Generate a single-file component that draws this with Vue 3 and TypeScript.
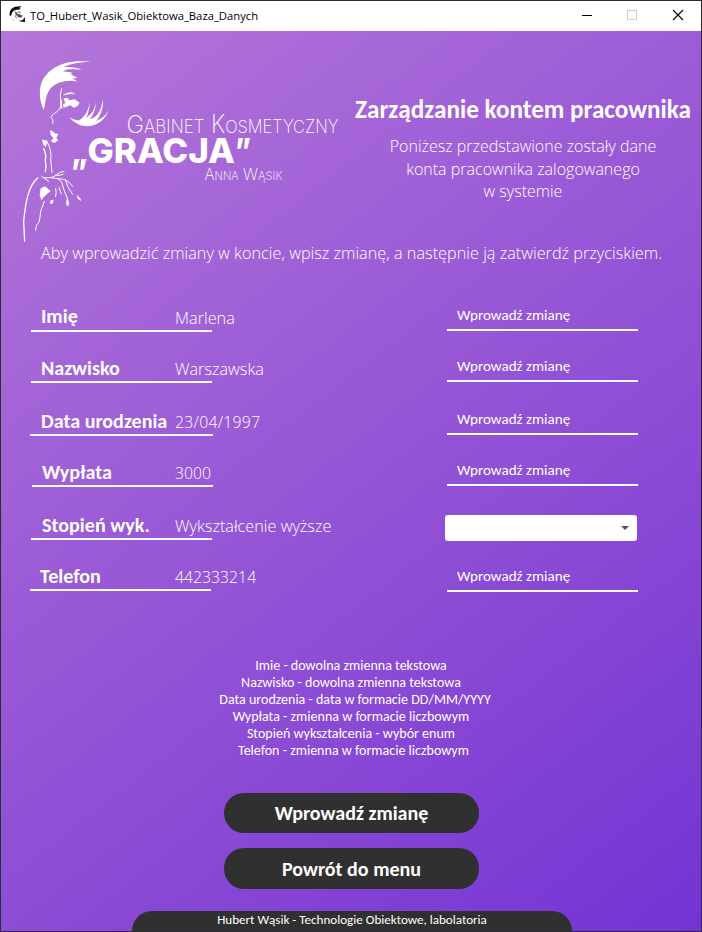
<script setup lang="ts">
import { ref } from 'vue'

interface Field {
  key: string
  label: string
  value: string
  select?: boolean
}

const fields: Field[] = [
  { key: 'imie', label: 'Imię', value: 'Marlena' },
  { key: 'nazwisko', label: 'Nazwisko', value: 'Warszawska' },
  { key: 'data', label: 'Data urodzenia', value: '23/04/1997' },
  { key: 'wyplata', label: 'Wypłata', value: '3000' },
  { key: 'stopien', label: 'Stopień wyk.', value: 'Wykształcenie wyższe', select: true },
  { key: 'telefon', label: 'Telefon', value: '442333214' },
]

const changes = ref<Record<string, string>>({})

const hints = [
  'Imie - dowolna zmienna tekstowa',
  'Nazwisko - dowolna zmienna tekstowa',
  'Data urodzenia - data w formacie DD/MM/YYYY',
  'Wypłata - zmienna w formacie liczbowym',
  'Stopień wykształcenia - wybór enum',
  'Telefon - zmienna w formacie liczbowym',
]
</script>

<template>
  <div class="window">
    <header class="titlebar">
      <svg class="app-icon" width="18" height="18" viewBox="0 0 54 54">
        <path d="M2 28C0 10 12 0 38 1L31 6 36 10 24 11C12 13 8 19 6 31Z" fill="#0b0b0b" />
        <path d="M18 17l6 5-4 10 2 5M26 19q5-3 9 1M25 24l7 2 8 4-5 4-8-2z" fill="#555" stroke="#333" stroke-width="2" />
        <path d="M27 41q10 6 16-1l5-7v15l-12-1z" fill="#111" />
        <path d="M6 35q4 8 11 9" fill="none" stroke="#bbb" stroke-width="2" />
      </svg>
      <span class="caption">TO_Hubert_Wasik_Obiektowa_Baza_Danych</span>
      <svg class="controls" width="137" height="30" viewBox="0 0 137 30" fill="none" shape-rendering="crispEdges">
        <path d="M18 14.5h10" stroke="#000" />
        <rect x="63.500" y="9.500" width="9" height="9" stroke="#ccc" />
        <path d="M109 9l10 10M119 9l-10 10" stroke="#000" stroke-width="1.1" shape-rendering="auto" />
      </svg>
    </header>

    <main class="page">
      <section class="top">
        <svg class="logo" width="340" height="200" viewBox="10 50 340 200" fill="#fff">
          <!-- hair, face and lips -->
          <g transform="translate(10 50) scale(.33333)">
            <path d="M101 180C92 160 87 136 91 112C101 61 151 37 202 34L243 34C211 37 182 42 161 50C181 50 199 53 212 58L174 58 158 64 188 68 182 73 202 83 188 86 204 95C170 88 139 97 122 115C106 134 108 157 101 180Z" />
            <path d="M131 61Q160 46 212 58" fill="none" stroke="#fff" stroke-width="2" />
            <path d="M155 115Q148 136 153 157C154 174 145 183 135 189C121 198 121 204 129 209L128 221" fill="none" stroke="#fff" stroke-width="3" />
            <path d="M154 151V176" fill="none" stroke="#fff" stroke-width="5" />
            <path d="M160 136C171 126 186 125 194 132C181 130 172 133 160 136Z" stroke="#fff" />
            <path d="M160 145L174 144 177 151 194 148 209 158 203 168 191 173 181 166 161 173 159 164 166 158Z" />
            <path d="M178 202C188 208 200 212 208 211C225 201 236 180 240 154C239 174 235 190 229 204C246 192 256 174 257 157C259 176 249 196 239 208C260 203 276 181 278 147C282 170 272 197 259 213C275 207 288 196 296 181C287 207 264 227 234 229C211 229 192 219 178 202Z" />
            <path d="M120 240L131 246 134 250 145 252 139 263 145 271 133 279 124 275 130 263 122 255Z" />
            <path d="M97 267L104 273 110 282 107 291 99 284Z" />
          </g>
          <!-- neck, arm and fingers -->
          <g transform="translate(10 140) scale(.33333)">
            <path d="M97 0L108 1 111 13 101 14ZM122 0L142 0 132 9ZM92 145L105 139 122 153 111 162 101 172 94 181 89 166Z" />
            <path d="M122 181L131 179 127 193 120 190ZM170 177L177 185 175 200 168 193ZM200 164L212 176 213 183 203 176Z" />
            <g fill="none" stroke="#fff" stroke-width="3" stroke-linecap="round">
              <path d="M101 26Q110 45 106 60Q110 78 106 95" stroke-width="4" />
              <path d="M110 2Q127 33 122 60L126 97" />
              <path d="M83 114C55 137 47 188 42 234L41 246 44 303" stroke-width="4" />
              <path d="M95 109L116 124M104 113Q127 116 140 104Q151 95 162 94M137 106Q151 108 159 103" />
              <path d="M126 114Q148 113 155 127L162 150 174 180M139 115Q165 116 177 127L188 139M166 119L173 139 188 163M137 146Q140 158 137 170M147 143L154 162" />
              <path d="M103 184Q89 212 88 244L79 257 77 271" />
            </g>
          </g>
          <g class="thin">
            <text x="126.500" y="132.700" font-size="25" textLength="78" lengthAdjust="spacingAndGlyphs">G<tspan font-size="18">ABINET</tspan></text>
            <text x="211" y="132.700" font-size="25" textLength="127.500" lengthAdjust="spacingAndGlyphs">K<tspan font-size="18">OSMETYCZNY</tspan></text>
            <text x="204.500" y="180" font-size="16" textLength="34" lengthAdjust="spacingAndGlyphs">A<tspan font-size="11.500">NNA</tspan></text>
            <text x="243" y="180" font-size="16" textLength="39.500" lengthAdjust="spacingAndGlyphs">W<tspan font-size="11.500">ĄSIK</tspan></text>
          </g>
          <g class="heavy" font-size="34.500">
            <text x="71.500" y="162.500" textLength="16" lengthAdjust="spacingAndGlyphs">„</text>
            <text x="87.500" y="162.500" textLength="147.500" lengthAdjust="spacingAndGlyphs">GRACJA</text>
            <text x="235" y="162.500" textLength="16" lengthAdjust="spacingAndGlyphs">”</text>
          </g>
        </svg>
        <div class="heading">
          <h1>Zarządzanie kontem pracownika</h1>
          <p>Poniżesz przedstawione zostały dane<br />konta pracownika zalogowanego<br />w systemie</p>
        </div>
      </section>

      <p class="intro">Aby wprowadzić zmiany w koncie, wpisz zmianę, a następnie ją zatwierdź przyciskiem.</p>

      <form class="fields" @submit.prevent>
        <div v-for="f in fields" :key="f.key" class="row" :class="f.key">
          <label class="label" :for="f.key">{{ f.label }}</label>
          <span class="value">{{ f.value }}</span>
          <div v-if="f.select" class="select">
            <svg width="8" height="4" viewBox="0 0 8 4"><path d="M0 0h8L4 4z" fill="#555" /></svg>
          </div>
          <input v-else :id="f.key" v-model="changes[f.key]" class="input" placeholder="Wprowadź zmianę" />
        </div>
      </form>

      <div class="hints">
        <div v-for="h in hints" :key="h" class="hint">{{ h }}</div>
      </div>

      <div class="actions">
        <button type="button">Wprowadź zmianę</button>
        <button type="button">Powrót do menu</button>
      </div>

      <footer class="footer">Hubert Wąsik - Technologie Obiektowe, labolatoria</footer>
    </main>
  </div>
</template>

<style>
body { background: #2b2a30; }
</style>

<style scoped>
.window {
  box-sizing: border-box;
  width: 702px;
  height: 932px;
  border: 1px solid #2e2c33;
  display: flex;
  flex-direction: column;
  overflow: hidden;
  color: #fff;
  font-family: Carlito, Calibri, Lato, sans-serif;
}
.titlebar {
  height: 30px;
  flex: none;
  display: flex;
  align-items: center;
  background: #fff;
  color: #000;
}
.app-icon { margin: 0 3px 2px 8px; }
.caption {
  flex: 1;
  font: 11.25px/30px "Open Sans", sans-serif;
  white-space: nowrap;
}
.page {
  flex: 1;
  display: flex;
  flex-direction: column;
  background: linear-gradient(142.1deg, #b576d9 0%, #7433d3 100%);
}
.top {
  display: flex;
  height: 210px;
  flex: none;
  padding-left: 9px;
}
.logo { margin-top: 19px; flex: none; }
.thin { font-family: Inter, sans-serif; font-weight: 200; }
.heavy { font-family: Inter, sans-serif; font-weight: 800; }
.heading {
  flex: 1;
  margin-left: -1px;
  margin-right: 4px;
  padding-top: 64px;
  text-align: center;
}
h1 {
  margin: 0;
  font-size: 25.2px;
  line-height: 30px;
  font-weight: 700;
  white-space: nowrap;
}
.heading p {
  margin: 10px 0 0;
  font: 300 16.05px/22.5px "Open Sans", sans-serif;
}
.intro {
  margin: 2px 0 0;
  padding-left: 40px;
  font: 300 16.27px/20px "Open Sans", sans-serif;
  white-space: nowrap;
}
.fields { margin-top: 18px; }
.row {
  height: 51px;
  display: flex;
  align-items: flex-end;
  padding-left: 30px;
}
.data, .stopien { height: 53px; }
.label {
  box-sizing: border-box;
  width: 181px;
  height: 30px;
  padding-left: 10px;
  border-bottom: 2px solid #fff;
  font-size: 20.1px;
  line-height: 31px;
  font-weight: 700;
  white-space: nowrap;
}
.value {
  width: 270px;
  height: 30px;
  margin-left: -37px;
  font: 300 16.25px/32px "Open Sans", sans-serif;
  white-space: nowrap;
}
.imie .label { line-height: 28px; }
.data .label { width: 183px; margin-left: -1px; padding-left: 11px; }
.data .value { margin-left: -38px; letter-spacing: 0.25px; }
.wyplata .label { margin-left: 1px; }
.wyplata .value { margin-left: -38px; }
.stopien .label { padding-left: 11px; }
.telefon .label { margin-left: -1px; }
.telefon .value { margin-left: -36px; }
.data .value, .wyplata .value, .telefon .value { font-size: 15.8px; }
.input {
  box-sizing: border-box;
  width: 191px;
  height: 30px;
  margin: 0 0 1px 2px;
  padding: 0 10px 1px;
  border: 0;
  border-bottom: 2px solid #fff;
  border-radius: 0;
  background: transparent;
  color: #fff;
  font: 15.1px/27px Carlito, Calibri, Lato, sans-serif;
  outline: 0;
}
.input::placeholder { color: #fff; opacity: 1; }
.telefon .input { margin-bottom: -1px; }
.select {
  box-sizing: border-box;
  width: 192px;
  height: 26px;
  margin-bottom: -1px;
  padding-right: 8px;
  display: flex;
  align-items: center;
  justify-content: flex-end;
  background: #fff;
  border-radius: 3px;
}
.hints {
  margin: 66px 0 0 8px;
  text-align: center;
  font-size: 14.05px;
  line-height: 17px;
}
.hint { padding-right: 8px; }
.hint:nth-child(3) { padding-right: 0; }
.hint:last-child { padding-right: 3px; }
.actions {
  margin-top: 34px;
  padding-left: 223px;
  display: flex;
  flex-direction: column;
  gap: 15px;
}
button {
  width: 255px;
  height: 40px;
  padding: 0;
  border: 0;
  border-radius: 20px;
  background: #303030;
  color: #fff;
  font: 700 20.05px/40px Carlito, Calibri, Lato, sans-serif;
}
button + button { height: 41px; }
.footer {
  width: 440px;
  height: 20px;
  margin: auto 0 0 131px;
  border-radius: 20px 20px 0 0;
  background: #303030;
  text-align: center;
  font-size: 13.09px;
  line-height: 18px;
}
</style>
